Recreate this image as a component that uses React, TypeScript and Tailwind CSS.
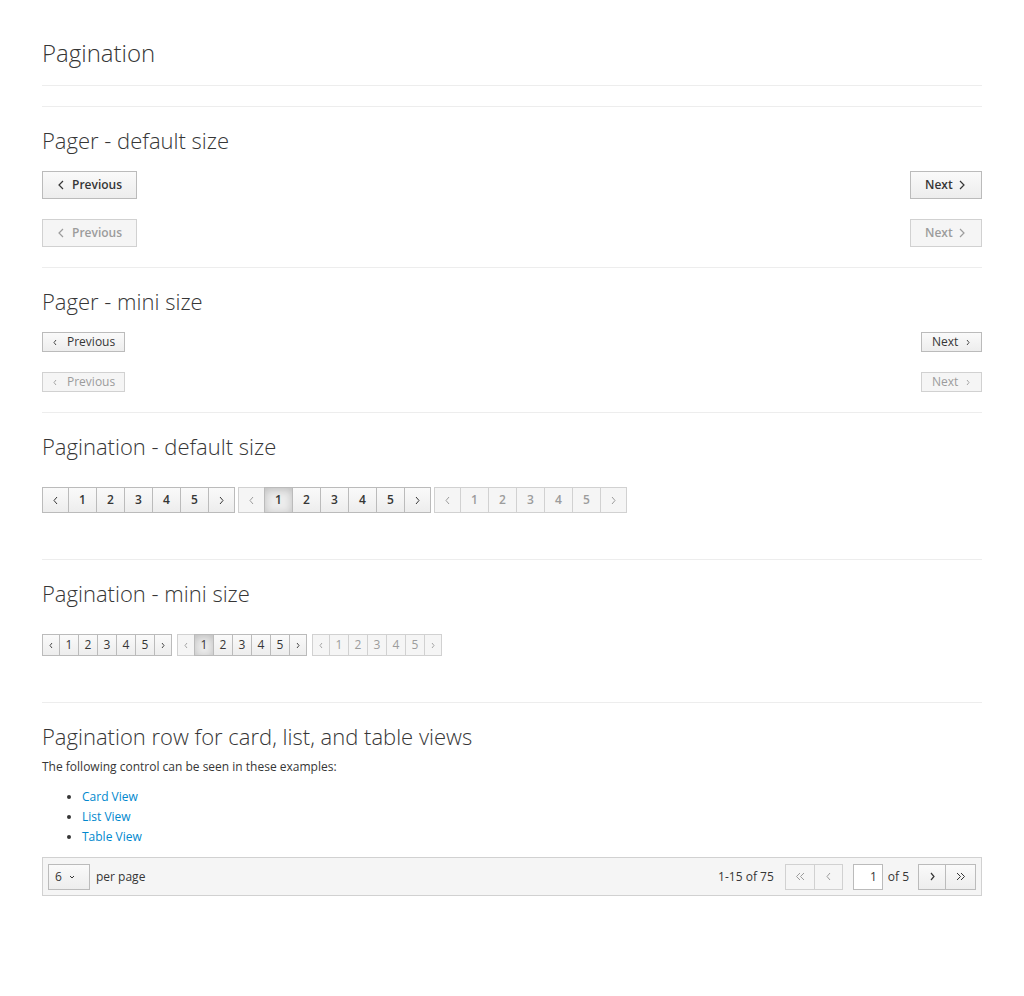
import React from 'react'

const enabledCls =
  'border-[#bbb] bg-[#f1f1f1] bg-linear-to-b from-[#fafafa] to-[#ededed] text-[#363636]'
const disabledCls = 'border-[#d1d1d1] bg-[#f5f5f5] text-[#9c9c9c]'

type Dir = 'left' | 'right' | 'down'

const Angle = ({ dir, w = 6, h = 9, sw = 1.3 }: { dir: Dir; w?: number; h?: number; sw?: number }) => {
  const pts =
    dir === 'left'
      ? `${w - 1},1 1,${h / 2} ${w - 1},${h - 1}`
      : dir === 'right'
        ? `1,1 ${w - 1},${h / 2} 1,${h - 1}`
        : `1,1 ${w / 2},${h - 1} ${w - 1},1`
  return (
    <svg width={w} height={h} viewBox={`0 0 ${w} ${h}`} className="shrink-0">
      <polyline points={pts} fill="none" stroke="currentColor" strokeWidth={sw} />
    </svg>
  )
}

const DoubleAngle = ({ dir }: { dir: 'left' | 'right' }) => (
  <svg width="10" height="9" viewBox="0 0 10 9" className="shrink-0">
    {dir === 'left' ? (
      <>
        <polyline points="5,1 1.5,4.5 5,8" fill="none" stroke="currentColor" strokeWidth="1" />
        <polyline points="9,1 5.5,4.5 9,8" fill="none" stroke="currentColor" strokeWidth="1" />
      </>
    ) : (
      <>
        <polyline points="1,1 4.5,4.5 1,8" fill="none" stroke="currentColor" strokeWidth="1" />
        <polyline points="5,1 8.5,4.5 5,8" fill="none" stroke="currentColor" strokeWidth="1" />
      </>
    )}
  </svg>
)

const Pager = ({ disabled, mini }: { disabled?: boolean; mini?: boolean }) => {
  const tone = disabled ? disabledCls : enabledCls
  if (mini) {
    return (
      <div className="flex justify-between">
        <span className={`flex items-center h-[20px] w-[83px] pl-[10px] gap-[10px] border ${tone}`}>
          <Angle dir="left" w={4} h={7} sw={0.9} />
          <span>Previous</span>
        </span>
        <span className={`flex items-center h-[20px] w-[61px] pl-[10px] gap-[8px] border ${tone}`}>
          <span>Next</span>
          <Angle dir="right" w={4} h={7} sw={0.9} />
        </span>
      </div>
    )
  }
  return (
    <div className="flex justify-between font-semibold">
      <span className={`flex items-center h-[28px] w-[95px] pl-[15px] gap-[8px] border ${tone}`}>
        <Angle dir="left" w={6} h={10} sw={1.2} />
        <span>Previous</span>
      </span>
      <span className={`flex items-center h-[28px] w-[72px] pl-[14px] gap-[6px] border ${tone}`}>
        <span>Next</span>
        <Angle dir="right" w={6} h={10} sw={1.2} />
      </span>
    </div>
  )
}

type Variant = 'normal' | 'first' | 'disabled'

const Pagination = ({ variant, mini }: { variant: Variant; mini?: boolean }) => {
  const h = mini ? 'h-[22px]' : 'h-[26px]'
  const edgeW = mini ? 'w-[18px]' : 'w-[27px]'
  const numW = mini ? 'w-[20px]' : 'w-[29px]'
  const prevDisabled = variant !== 'normal'
  const allDisabled = variant === 'disabled'
  const aw = mini ? 4 : 5
  const ah = mini ? 7 : 9
  return (
    <div className={`flex ${mini ? '' : 'font-semibold'}`}>
      <span
        className={`flex items-center justify-center border ${h} ${edgeW} ${prevDisabled ? disabledCls : enabledCls}`}
      >
        <Angle dir="left" w={aw} h={ah} sw={mini ? 0.9 : 1} />
      </span>
      {[1, 2, 3, 4, 5].map((n) => {
        const active = variant === 'first' && n === 1
        const cls = allDisabled
          ? disabledCls
          : active
            ? 'border-[#bbb] bg-[#ececec] text-[#363636] shadow-[inset_0_2px_8px_rgba(3,3,3,0.2)]'
            : enabledCls
        return (
          <span key={n} className={`-ml-px flex items-center justify-center border ${h} ${numW} ${cls}`}>
            {n}
          </span>
        )
      })}
      <span
        className={`-ml-px flex items-center justify-center border ${h} ${edgeW} ${allDisabled ? disabledCls : enabledCls}`}
      >
        <Angle dir="right" w={aw} h={ah} sw={mini ? 0.9 : 1} />
      </span>
    </div>
  )
}

const Heading = ({ children }: { children: React.ReactNode }) => (
  <h2 className="mt-[20px] text-[22px] leading-[26px] font-light text-[#363636]">{children}</h2>
)

const Rule = ({ className = '' }: { className?: string }) => (
  <hr className={`border-0 border-t border-[#ededed] ${className}`} />
)

export default function App() {
  return (
    <div className="min-h-screen bg-white font-['Open_Sans',sans-serif] text-[12px] leading-[20px] text-[#363636]">
      <div className="mx-auto w-[940px] pt-[40px] pb-[80px]">
        <h1 className="text-[24px] leading-[26px] font-light">Pagination</h1>
        <Rule className="mt-[19px]" />
        <Rule className="mt-[20px]" />

        <Heading>Pager - default size</Heading>
        <div className="mt-[18px]">
          <Pager />
        </div>
        <div className="mt-[20px]">
          <Pager disabled />
        </div>
        <Rule className="mt-[20px]" />

        <Heading>Pager - mini size</Heading>
        <div className="mt-[18px]">
          <Pager mini />
        </div>
        <div className="mt-[20px]">
          <Pager mini disabled />
        </div>
        <Rule className="mt-[20px]" />

        <Heading>Pagination - default size</Heading>
        <div className="mt-[28px] flex gap-[3px]">
          <Pagination variant="normal" />
          <Pagination variant="first" />
          <Pagination variant="disabled" />
        </div>
        <Rule className="mt-[46px]" />

        <Heading>Pagination - mini size</Heading>
        <div className="mt-[28px] flex gap-[5px]">
          <Pagination variant="normal" mini />
          <Pagination variant="first" mini />
          <Pagination variant="disabled" mini />
        </div>
        <Rule className="mt-[46px]" />

        <Heading>Pagination row for card, list, and table views</Heading>
        <p className="mt-[8px]">The following control can be seen in these examples:</p>
        <ul className="mt-[10px] list-disc pl-[40px] text-[#0088ce] marker:text-[#363636]">
          <li>Card View</li>
          <li>List View</li>
          <li>Table View</li>
        </ul>

        <div className="mt-[10px] flex h-[39px] items-center border border-[#d1d1d1] bg-[#f5f5f5] px-[5px]">
          <span className={`flex h-[26px] w-[42px] items-center gap-[7px] border pl-[6px] ${enabledCls}`}>
            <span>6</span>
            <Angle dir="down" w={6} h={4} sw={1} />
          </span>
          <span className="ml-[6px]">per page</span>

          <span className="ml-auto">1-15 of 75</span>
          <div className="ml-[11px] flex">
            <span className={`flex h-[26px] w-[30px] items-center justify-center border ${disabledCls}`}>
              <DoubleAngle dir="left" />
            </span>
            <span className={`-ml-px flex h-[26px] w-[29px] items-center justify-center border ${disabledCls}`}>
              <Angle dir="left" w={5} h={9} sw={1} />
            </span>
          </div>
          <span className="ml-[10px] flex h-[26px] w-[30px] items-center justify-end border border-[#bbb] bg-white pr-[5px]">
            1
          </span>
          <span className="ml-[5px]">of 5</span>
          <div className="ml-[9px] flex">
            <span className={`flex h-[26px] w-[28px] items-center justify-center border ${enabledCls}`}>
              <Angle dir="right" w={5} h={9} sw={1.2} />
            </span>
            <span className={`-ml-px flex h-[26px] w-[31px] items-center justify-center border ${enabledCls}`}>
              <DoubleAngle dir="right" />
            </span>
          </div>
        </div>
      </div>
    </div>
  )
}
